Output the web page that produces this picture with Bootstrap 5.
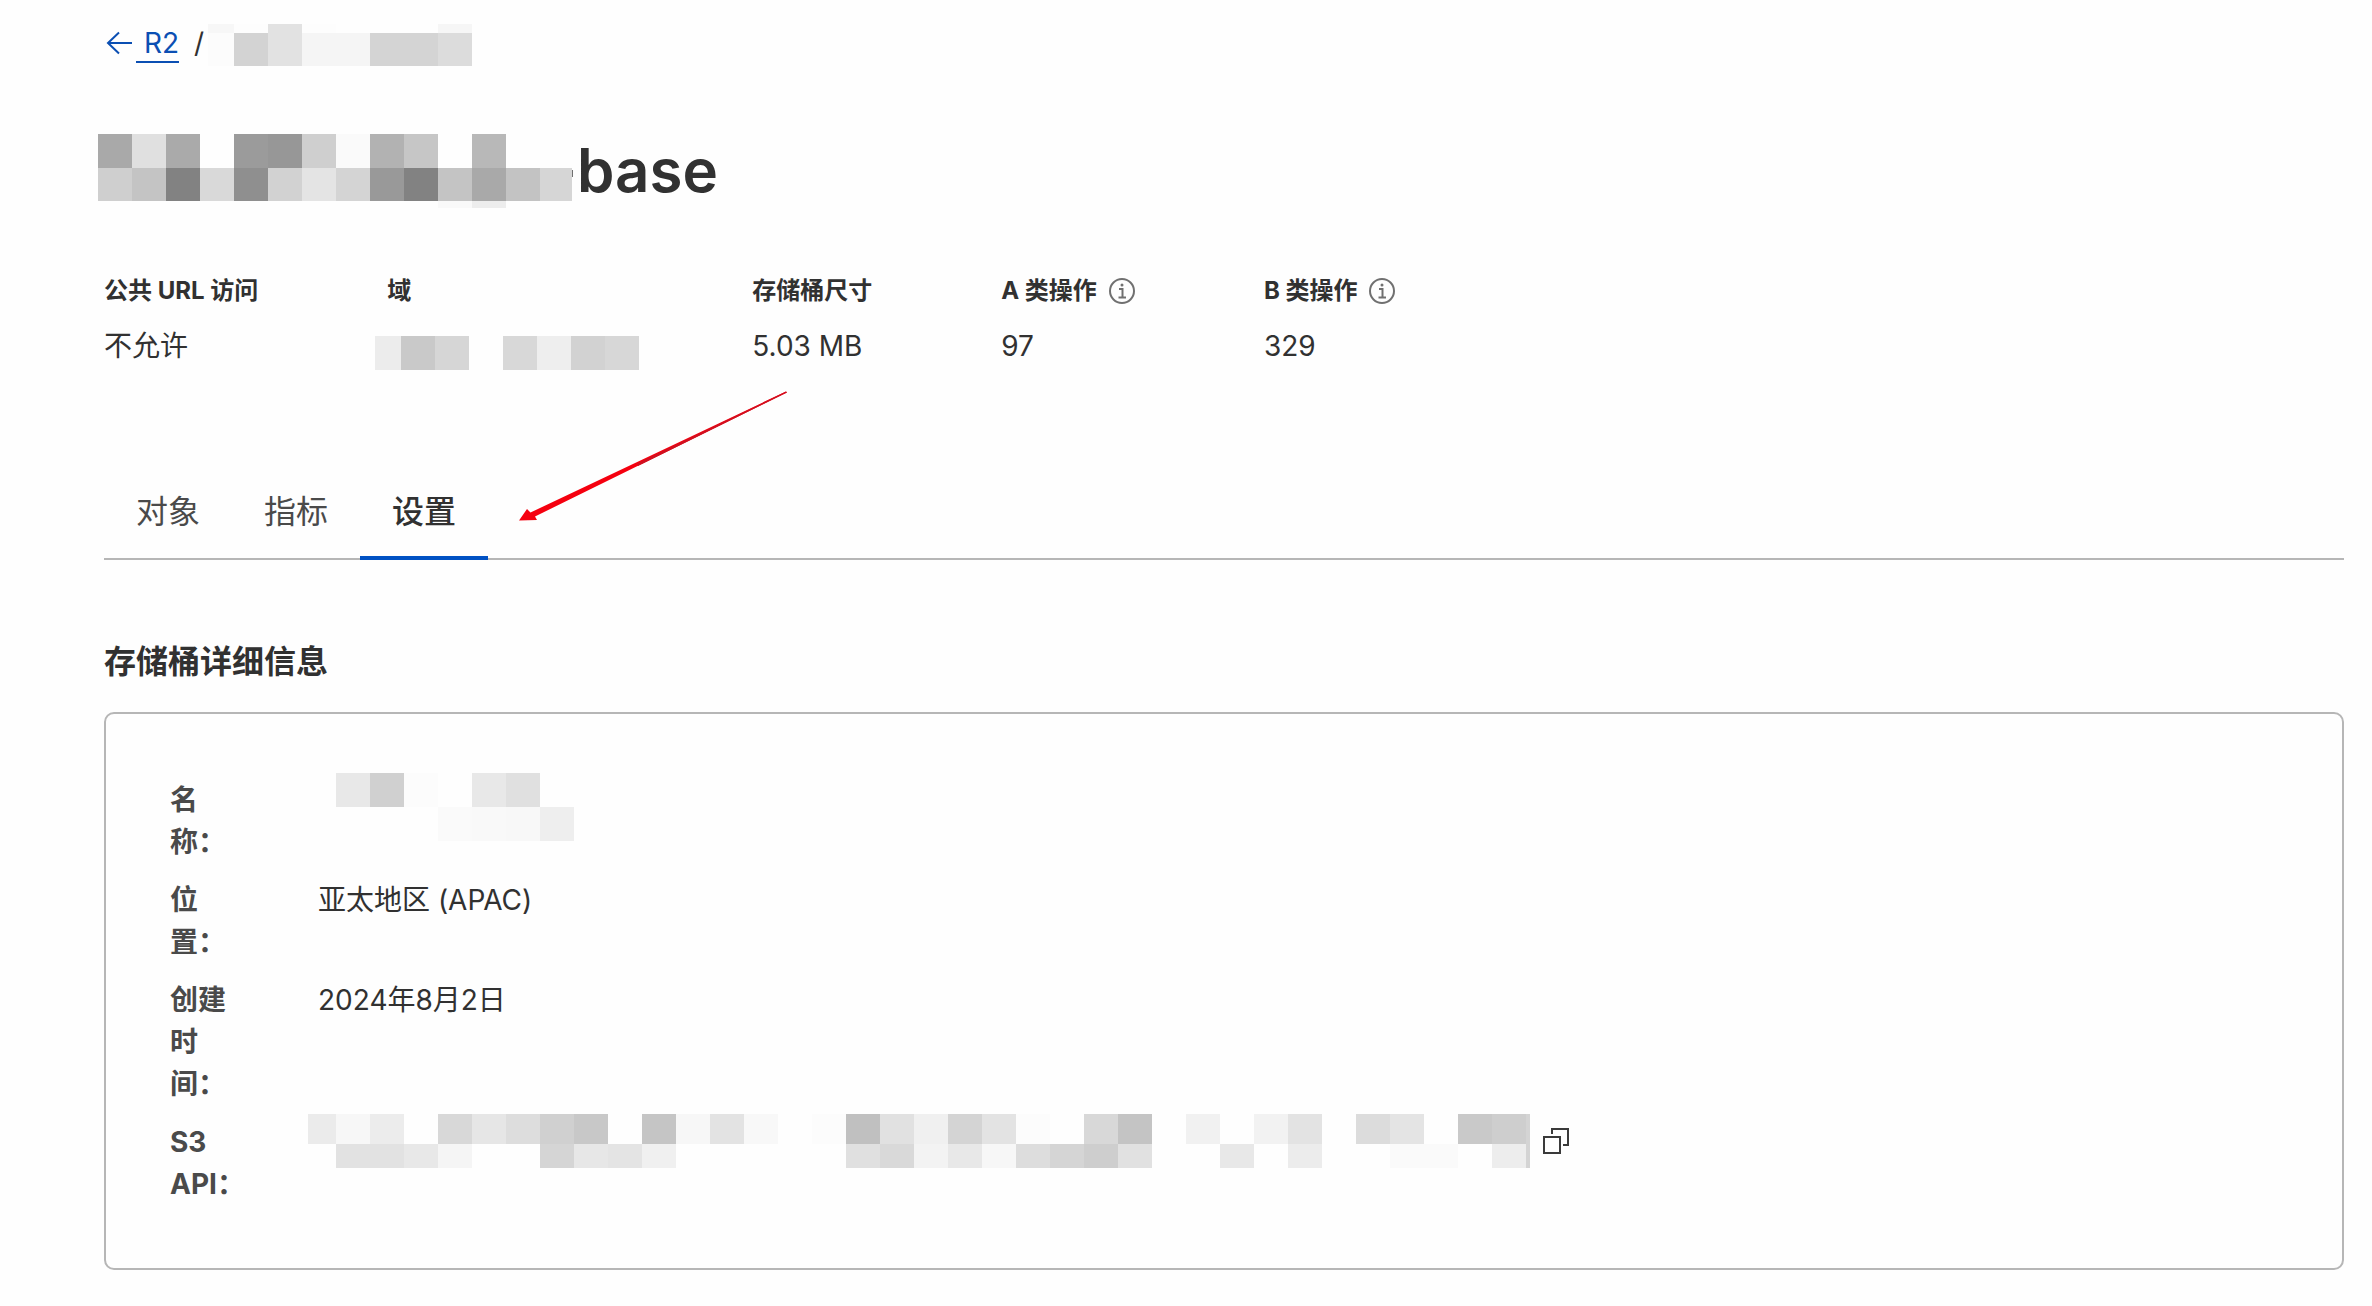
<!DOCTYPE html>
<html lang="zh-CN">
<head>
<meta charset="utf-8">
<meta name="viewport" content="width=device-width, initial-scale=1">
<title>R2 存储桶设置</title>
<link rel="stylesheet" href="https://cdn.jsdelivr.net/npm/bootstrap@5.3.0/dist/css/bootstrap.min.css">
<style>
  body { font-family: Inter, "Noto Sans CJK SC", sans-serif; font-size: 28px; line-height: 42px; color: #313131; background: #fefefe; }
  .page-wrap { padding: 22px 28px 36px 104px; }
  .crumbs { height: 44px; margin-bottom: 68px; }
  .crumb-link { color: #0b4fb3; text-decoration: underline; text-decoration-thickness: 2px; text-underline-offset: 8px; }
  .crumb-sep { margin-left: 15px; margin-right: 4px; }
  .bucket-title { font-size: 60px; line-height: 72px; font-weight: 600; margin: 0 0 65px -6px; min-height: 74px; }
  .stat-list { column-gap: 129px; row-gap: 32px; margin-bottom: 96px; }
  .stat-list dt { font-size: 24px; line-height: 36px; font-weight: 700; margin-bottom: 16px; }
  .stat-list dd { height: 42px; }
  .domain-col { width: 236px; }
  .domain-col svg { margin: 11px 0 0 -12px; }
  .plain-btn { border: 0; padding: 0; background: none; color: #3a3a3a; line-height: 0; }
  .info-btn { color: #707070; margin-left: 12px; }
  .page-tabs { border-bottom: 2px solid #b6b6b6; margin-bottom: 78px; }
  .page-tabs .nav-link { font-size: 32px; line-height: 48px; padding: 25px 32px 20px; color: #4a4a4a; border: 0; border-bottom: 4px solid transparent; border-radius: 0; margin-bottom: -2px; }
  .page-tabs .nav-link.active { color: #313131; font-weight: 500; border-color: #0051c3; }
  .pointer-arrow { left: 414px; top: -73px; pointer-events: none; }
  .section-title { font-size: 32px; line-height: 48px; font-weight: 600; margin-bottom: 26px; }
  .detail-card { border: 2px solid #b6b6b6; border-radius: 10px; background: transparent; padding: 65px 64px 63px; }
  .detail-card dl { gap: 16px; }
  .detail-card dt { width: 148px; font-weight: 700; color: #4a4a4a; }
  .name-mask { margin: -6px 0 -26px 18px; }
  .api-mask { margin: -7px 0 0 -10px; }
  .copy-btn { margin: 7px 0 0 13px; }
</style>
</head>
<body>
<main class="page-wrap">
  <nav class="crumbs d-flex align-items-start" aria-label="breadcrumb">
    <svg width="32" height="42" viewBox="0 0 32 42" fill="none" stroke="#0b4fb3" stroke-width="2" aria-hidden="true"><path d="M28 21H4M15 10.500L4 21l11 10.500"/></svg>
    <a class="crumb-link" href="#">&nbsp;R2</a>
    <span class="crumb-sep">/</span>
    <svg class="mosaic align-self-end" data-x="0 26 60 94 128 162 196 230 264" data-y="0 9 42" data-c="f7 fd e2 fd - - - f6|fc d3 e2 f5 f5 d4 d4 dc"></svg>
  </nav>

  <h1 class="bucket-title d-flex align-items-start"><svg class="mosaic me-1 flex-shrink-0" data-x="0 34 68 102 136 170 204 238 272 306 340 374 408 442 474 475" data-y="0 34 36 43 67 74" data-c="a9 e0 aa - 9b 97 cf fa b2 c6 - b8 - - -|cf c4 82 d9 8f d2 e4 d4 99 82 c4 a9 c3 d6 -|cf c4 82 d9 8f d2 e4 d4 99 82 c4 a9 c3 d6 70|cf c4 82 d9 8f d2 e4 d4 99 82 c4 a9 c3 d6 -|- - - - - - - - - - f9 ed - - -"></svg><span>base</span></h1>

  <dl class="stat-list d-flex flex-wrap">
    <div><dt>公共 URL 访问</dt><dd class="mb-0">不允许</dd></div>
    <div class="domain-col"><dt>域</dt><dd class="mb-0 d-flex"><svg class="mosaic flex-shrink-0" data-x="0 26 60 94 128 162 196 230 264" data-y="0 34" data-c="ec c9 d6 - d8 ee d2 d7"></svg></dd></div>
    <div><dt>存储桶尺寸</dt><dd class="mb-0">5.03 MB</dd></div>
    <div><dt class="d-flex align-items-center">A 类操作<button class="plain-btn info-btn" type="button" aria-label="A 类操作说明"><svg width="26" height="26" viewBox="0 0 26 26" fill="none" stroke="currentColor" stroke-width="2"><circle cx="13" cy="13" r="12"/><path d="M10 11h3.500v8M9.500 19.500h7.500"/><circle cx="13" cy="7" r="1.500" fill="currentColor" stroke="none"/></svg></button></dt><dd class="mb-0">97</dd></div>
    <div><dt class="d-flex align-items-center">B 类操作<button class="plain-btn info-btn" type="button" aria-label="B 类操作说明"><svg width="26" height="26" viewBox="0 0 26 26" fill="none" stroke="currentColor" stroke-width="2"><circle cx="13" cy="13" r="12"/><path d="M10 11h3.500v8M9.500 19.500h7.500"/><circle cx="13" cy="7" r="1.500" fill="currentColor" stroke="none"/></svg></button></dt><dd class="mb-0">329</dd></div>
  </dl>

  <nav class="page-tabs nav position-relative">
    <a class="nav-link" href="#">对象</a>
    <a class="nav-link" href="#">指标</a>
    <a class="nav-link active" href="#" aria-current="page">设置</a>
    <svg class="pointer-arrow position-absolute" width="270" height="132" viewBox="0 0 270 132" aria-hidden="true"><path d="M268 1.500L269 2.500L17 126.500L19 130L1 130.500L9 119L12.500 122.500Z" fill="#f5000f"/><path d="M268 1.500L269 2.500L120 76L119 73.500Z" fill="#cf1020"/></svg>
  </nav>

  <h2 class="section-title">存储桶详细信息</h2>
  <section class="card detail-card">
    <dl class="d-flex flex-column mb-0">
      <div class="d-flex align-items-start"><dt>名<br>称：</dt><dd class="mb-0 d-flex"><svg class="mosaic name-mask" data-x="0 34 68 102 136 170 204 238" data-y="0 34 68" data-c="e8 d0 fc - e8 e0 -|- - - fa f9 f8 ee"></svg></dd></div>
      <div class="d-flex align-items-start"><dt>位<br>置：</dt><dd class="mb-0">亚太地区 (APAC)</dd></div>
      <div class="d-flex align-items-start"><dt>创建<br>时<br>间：</dt><dd class="mb-0">2024年8月2日</dd></div>
      <div class="d-flex align-items-start"><dt>S3<br>API：</dt><dd class="mb-0 d-flex align-items-start"><svg class="mosaic api-mask" data-x="0 28 62 96 130 164 198 232 266 300 334 368 402 436 470 504 538 572 606 640 674 708 742 776 810 844 878 912 946 980 1014 1048 1082 1116 1150 1184 1218 1222" data-y="0 30 54" data-c="eb f7 ec - d8 e6 dd d0 c8 - c5 f7 e3 f8 - fc c0 e1 f0 d4 e3 fc - d8 c4 - f1 - f2 e3 - dc e4 - c9 ce d4|- e2 e2 e8 f5 - - d5 e7 e4 f0 fe - - - - e0 d9 f3 e8 f7 dd d5 ce e1 - - e8 - ec - - fa fa - ed d4"></svg><button class="plain-btn copy-btn" type="button" aria-label="复制"><svg width="26" height="26" viewBox="0 0 26 26" fill="none" stroke="currentColor" stroke-width="2"><path d="M1 9h16v16H1zM9 6V1h16v16h-5"/></svg></button></dd></div>
    </dl>
  </section>
</main>
<script src="https://cdn.jsdelivr.net/npm/bootstrap@5.3.0/dist/js/bootstrap.bundle.min.js"></script>
<script>
  // Draws the grey privacy blocks from column edges, row edges and grey levels.
  document.querySelectorAll('.mosaic').forEach(function (svg) {
    var xs = svg.dataset.x.split(' ').map(Number), ys = svg.dataset.y.split(' ').map(Number);
    svg.setAttribute('width', xs[xs.length - 1]);
    svg.setAttribute('height', ys[ys.length - 1]);
    svg.setAttribute('aria-hidden', 'true');
    svg.setAttribute('shape-rendering', 'crispEdges');
    svg.dataset.c.split('|').forEach(function (row, j) {
      row.split(' ').forEach(function (c, i) {
        if (c === '-') return;
        var r = document.createElementNS('http://www.w3.org/2000/svg', 'rect');
        r.setAttribute('x', xs[i]); r.setAttribute('y', ys[j]);
        r.setAttribute('width', xs[i + 1] - xs[i]); r.setAttribute('height', ys[j + 1] - ys[j]);
        r.setAttribute('fill', '#' + c + c + c);
        svg.appendChild(r);
      });
    });
  });
</script>
</body>
</html>
